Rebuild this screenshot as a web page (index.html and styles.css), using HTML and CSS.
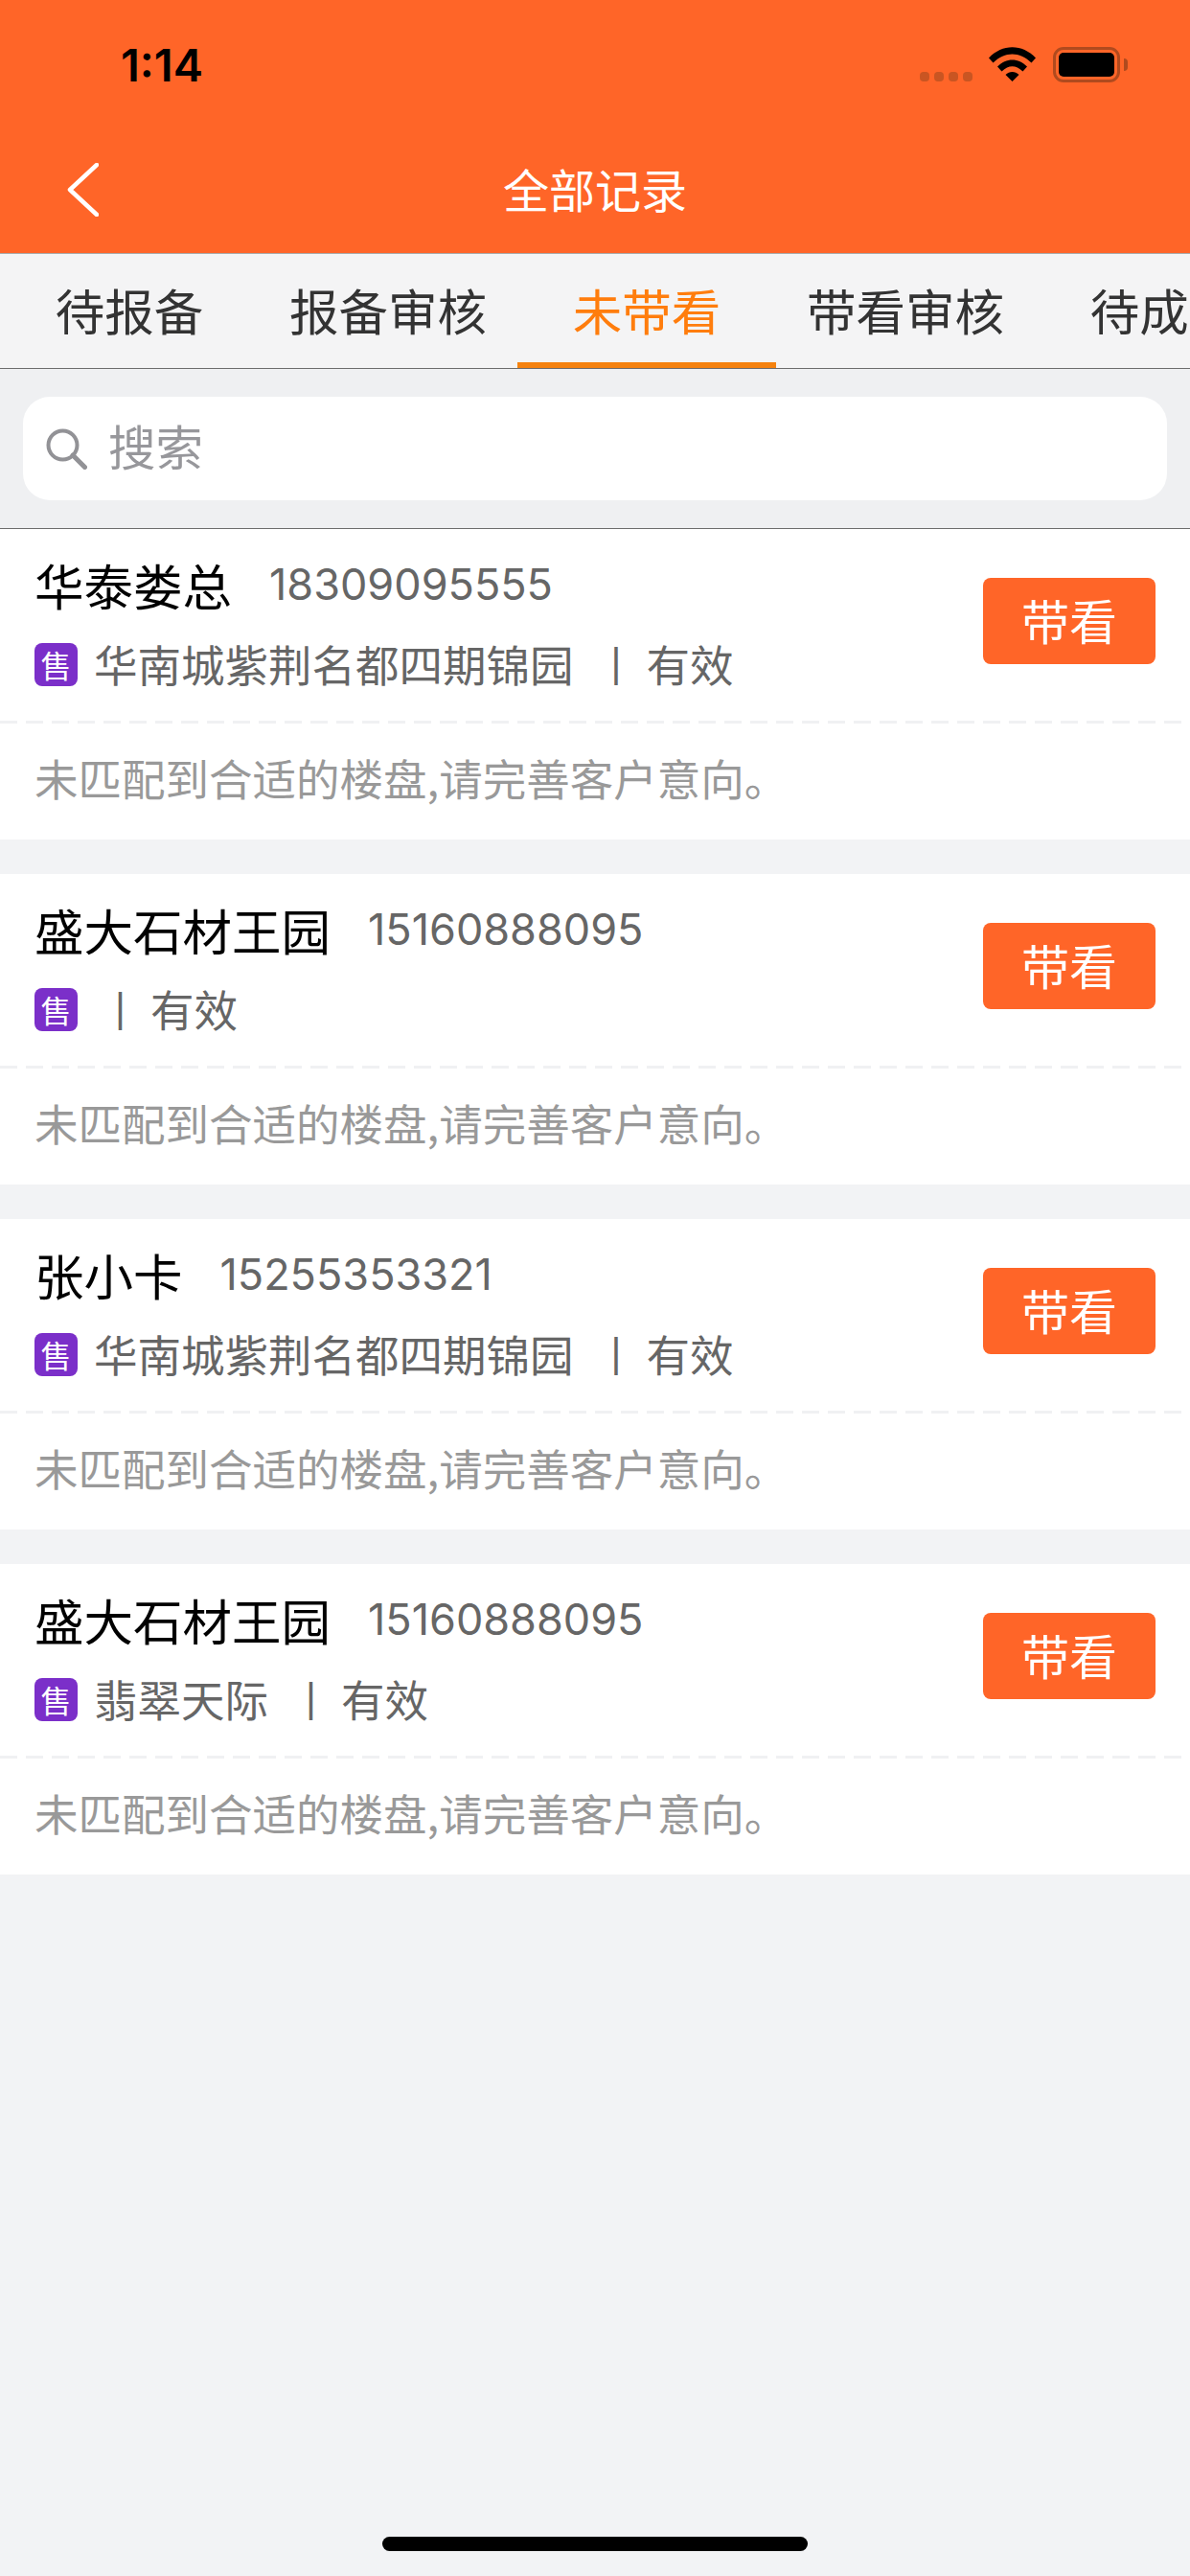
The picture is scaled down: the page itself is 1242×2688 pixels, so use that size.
FILE: index.html
```html
<html>
<head>
  <meta charset="UTF-8">
  <meta name="viewport" content="width=device-width, initial-scale=1.0">
  <title>全部记录</title>
  <link rel="stylesheet" href="styles.css">
</head>
<body>

  <div class="header">
    <div class="status-bar">
      <span class="time">1:14</span>
      <div class="status-icons">
        <div class="signal"><i></i><i></i><i></i><i></i></div>
        <svg class="wifi" width="49" height="36" viewBox="0 0 49 36">
          <path d="M0 11.5 C14 -3.5 35 -3.5 49 11.5 L44.5 16.5 C32 4.5 17 4.5 4.5 16.5 Z"/>
          <path d="M9 20.5 C18 11 31 11 40 20.5 L35.5 25.5 C28 18.5 21 18.5 13.5 25.5 Z"/>
          <path d="M17.5 29 C21.5 25 27.5 25 31.5 29 L24.5 36 Z"/>
        </svg>
        <div class="battery"><div class="battery-fill"></div></div>
        <div class="battery-nub"></div>
      </div>
    </div>
    <div class="nav-bar">
      <svg class="back" width="33" height="56" viewBox="0 0 33 56">
        <path d="M31 2 L3 28 L31 54" fill="none" stroke="#fff" stroke-width="4.5" stroke-linecap="round" stroke-linejoin="round"/>
      </svg>
      <span class="nav-title">全部记录</span>
    </div>
  </div>

  <div class="tabs">
    <div class="tab">待报备</div>
    <div class="tab">报备审核</div>
    <div class="tab active">未带看</div>
    <div class="tab">带看审核</div>
    <div class="tab">待成交</div>
  </div>

  <div class="search-wrap">
    <div class="search">
      <svg class="search-icon" width="43" height="43" viewBox="0 0 43 43">
        <circle cx="17.5" cy="17.5" r="15" fill="none" stroke="#929296" stroke-width="4"/>
        <path d="M28 28 L40.5 40.5" fill="none" stroke="#929296" stroke-width="5" stroke-linecap="round"/>
      </svg>
      <span class="search-text">搜索</span>
    </div>
  </div>

  <div class="list">
    <div class="card">
      <div class="card-top">
        <div class="info">
          <div class="name-row"><span class="name">华泰娄总</span><span class="phone">18309095555</span></div>
          <div class="sub-row"><span class="badge">售</span><span class="project">华南城紫荆名都四期锦园</span><span class="sep">|</span><span>有效</span></div>
        </div>
        <div class="btn">带看</div>
      </div>
      <div class="note">未匹配到合适的楼盘,请完善客户意向。</div>
    </div>

    <div class="card">
      <div class="card-top">
        <div class="info">
          <div class="name-row"><span class="name">盛大石材王园</span><span class="phone">15160888095</span></div>
          <div class="sub-row"><span class="badge">售</span><span class="project"></span><span class="sep">|</span><span>有效</span></div>
        </div>
        <div class="btn">带看</div>
      </div>
      <div class="note">未匹配到合适的楼盘,请完善客户意向。</div>
    </div>

    <div class="card">
      <div class="card-top">
        <div class="info">
          <div class="name-row"><span class="name">张小卡</span><span class="phone">15255353321</span></div>
          <div class="sub-row"><span class="badge">售</span><span class="project">华南城紫荆名都四期锦园</span><span class="sep">|</span><span>有效</span></div>
        </div>
        <div class="btn">带看</div>
      </div>
      <div class="note">未匹配到合适的楼盘,请完善客户意向。</div>
    </div>

    <div class="card">
      <div class="card-top">
        <div class="info">
          <div class="name-row"><span class="name">盛大石材王园</span><span class="phone">15160888095</span></div>
          <div class="sub-row"><span class="badge">售</span><span class="project">翡翠天际</span><span class="sep">|</span><span>有效</span></div>
        </div>
        <div class="btn">带看</div>
      </div>
      <div class="note">未匹配到合适的楼盘,请完善客户意向。</div>
    </div>
  </div>

  <div class="home-indicator"></div>

</body>
</html>
```

FILE: styles.css
```css
html, body {
  margin: 0;
  height: 2688px;
  overflow: hidden;
}

body {
  position: relative;
  background: #f2f3f5;
  font-family: "Noto Sans CJK SC", sans-serif;
}

.header {
  background: #ff6528;
  height: 264px;
}

.status-bar {
  height: 132px;
  box-sizing: border-box;
  padding: 49px 65px 0 126px;
  display: flex;
  justify-content: space-between;
  align-items: flex-start;
}

.time {
  font-family: "Inter", sans-serif;
  font-size: 47px;
  font-weight: 600;
  line-height: 37px;
  color: #000;
}

.status-icons {
  display: flex;
  align-items: flex-start;
}

.signal {
  display: flex;
  gap: 5px;
  margin: 26px 17px 0 0;
}

.signal i {
  width: 10px;
  height: 10px;
  border-radius: 4px;
  background: #c95522;
}

.wifi {
  fill: #000;
  margin-right: 18px;
}

.battery {
  width: 70px;
  height: 37px;
  box-sizing: border-box;
  border: 3px solid #b04a1e;
  border-radius: 11px;
  padding: 3px;
}

.battery-fill {
  height: 100%;
  background: #000;
  border-radius: 5px;
}

.battery-nub {
  width: 4px;
  height: 13px;
  margin: 12px 0 0 4px;
  background: #b04a1e;
  border-radius: 0 4px 4px 0;
}

.nav-bar {
  height: 132px;
  box-sizing: border-box;
  padding-bottom: 5px;
  display: flex;
  align-items: center;
  justify-content: center;
  position: relative;
}

.back {
  position: absolute;
  left: 70px;
  top: 38px;
}

.nav-title {
  font-size: 48px;
  color: #fff;
}

.tabs {
  display: flex;
  height: 121px;
  box-sizing: border-box;
  overflow: hidden;
  background: #f4f4f5;
  border-top: 1px solid #a8a8a8;
  border-bottom: 1px solid #6d6d6d;
}

.tab {
  flex: 0 0 270px;
  height: 119px;
  box-sizing: border-box;
  padding-top: 23px;
  text-align: center;
  font-size: 51.5px;
  line-height: 70px;
  color: #333;
}

.tab.active {
  color: #ff7d0d;
  border-bottom: 6px solid #f5820f;
}

.search-wrap {
  background: #eff0f2;
  height: 167px;
  box-sizing: border-box;
  padding: 29px 24px 0;
  border-bottom: 1px solid #6d6d6d;
}

.search {
  height: 108px;
  background: #fff;
  border-radius: 28px;
  display: flex;
  align-items: center;
  padding-left: 24px;
  font-size: 49.5px;
  color: #97979b;
}

.search-icon {
  margin: 0 22px 0 0;
}

.search-text {
  margin-bottom: 8px;
}

.card {
  background: #fff;
  height: 324px;
  margin-bottom: 36px;
}

.card-top {
  height: 203px;
  box-sizing: border-box;
  padding: 21px 36px 0;
  display: flex;
  justify-content: space-between;
  background: repeating-linear-gradient(to right, #f0f1f3 0 18px, transparent 18px 27px) left bottom / 100% 3px no-repeat;
}

.name-row {
  display: flex;
  align-items: center;
  height: 72px;
}

.name {
  font-size: 51.5px;
  color: #000;
}

.phone {
  font-family: "Inter", sans-serif;
  font-size: 45px;
  color: #666;
  margin-left: 39px;
}

.sub-row {
  display: flex;
  align-items: center;
  height: 60px;
  margin-top: 17px;
  font-size: 45.5px;
  color: #666;
}

.badge {
  width: 45px;
  height: 45px;
  border-radius: 8px;
  background: #7b2fc9;
  color: #fff;
  font-size: 32px;
  line-height: 45px;
  text-align: center;
  margin: 3px 17px 0 0;
}

.project {
  margin-right: 17px;
}

.project:empty {
  margin-right: 0;
}

.sep {
  font-family: "Liberation Sans", sans-serif;
  font-size: 42px;
  margin: 0 26px 0 22px;
}

.btn {
  width: 180px;
  height: 90px;
  margin-top: 30px;
  background: #ff6528;
  border-radius: 8px;
  color: #fff;
  font-size: 50px;
  line-height: 86px;
  text-align: center;
}

.note {
  padding: 24px 36px 0;
  font-size: 45.5px;
  line-height: 64px;
  color: #999;
}

.home-indicator {
  position: absolute;
  left: 399px;
  top: 2647px;
  width: 444px;
  height: 15px;
  border-radius: 8px;
  background: #000;
}
```
